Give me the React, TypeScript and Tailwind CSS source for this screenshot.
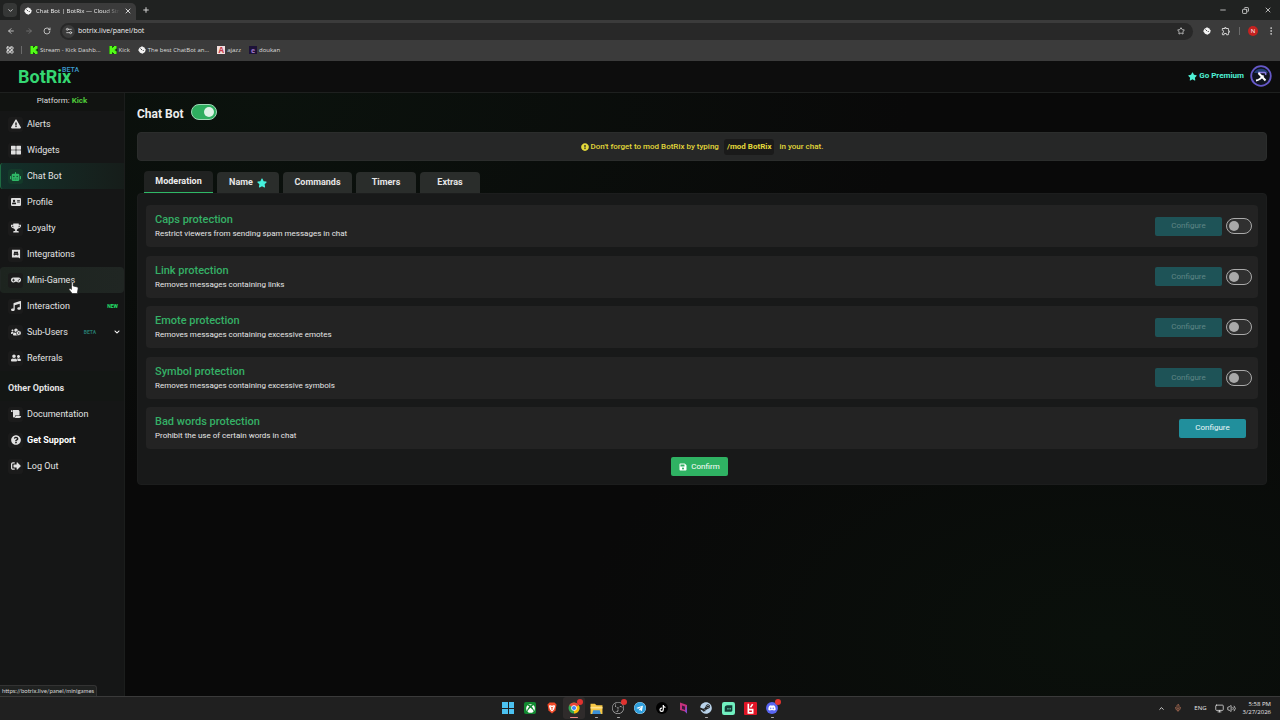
import React, { useState } from 'react';
import type { ReactNode } from 'react';
import {
  FaExclamationTriangle, FaThLarge, FaRobot, FaAddressCard, FaTrophy, FaGamepad, FaMusic, FaUsersCog,
  FaUserFriends, FaScroll, FaQuestionCircle, FaSignOutAlt, FaSave, FaStar, FaExclamationCircle,
  FaChevronDown, FaTelegram, FaTiktok, FaSteam, FaDiscord, FaXbox,
} from 'react-icons/fa';
import { SiKick, SiObsstudio } from 'react-icons/si';
import { MdOutlineExtension } from 'react-icons/md';
import {
  ArrowLeft, ArrowRight, RotateCw, ChevronDown, ChevronUp, X, Plus, Minus, Copy, Star,
  EllipsisVertical, Mic, Volume2, Settings2, LayoutGrid, Monitor,
} from 'lucide-react';

function BotrixMark({ className }: { className: string }) {
  return (
    <svg viewBox="0 0 16 16" className={className} aria-hidden="true">
      <path d="M4 3 8 .5l3.500 2L15.500 7l-1.500 5L9 15.500l-5-2L.5 8.500 2 5z" fill="#f4f4f4" />
      <path d="M5 5l3 3M9.500 8l2 2" stroke="#222" strokeWidth="1.600" />
    </svg>
  );
}

function Kick() {
  return (
    <span className="flex size-2 items-center justify-center bg-[#123a0c] text-[#53fc18]">
      <SiKick className="size-2" />
    </span>
  );
}

const bookmarks: { label: string; icon: ReactNode }[] = [
  { label: 'Stream - Kick Dashb...', icon: <Kick /> },
  { label: 'Kick', icon: <Kick /> },
  { label: 'The best ChatBot an...', icon: <BotrixMark className="size-2" /> },
  { label: 'ajazz', icon: <span className="flex size-2 items-center justify-center bg-[#f3dede] text-[8px] leading-none font-bold text-[#c33a48]">A</span> },
  { label: 'doukan', icon: <span className="flex size-2 items-center justify-center bg-[#1d1238] text-[7px] leading-none font-bold text-[#a177c9]">e</span> },
];

function Browser() {
  return (
    <div className="bg-[#3b3b3b] font-['Open_Sans','Noto_Sans',sans-serif] text-[#d4d4d4]">
      <div className="flex h-5 items-center justify-between bg-[#202221]">
        <div className="flex h-full items-center">
          <button type="button" aria-label="Search tabs" className="ml-[3px] flex size-[14px] items-center justify-center rounded-[4px] bg-[#353736]">
            <ChevronDown className="size-[7px]" strokeWidth={3} />
          </button>
          <div className="mt-[3px] ml-[3px] flex h-[17px] w-[116px] items-center gap-1 rounded-t-[5px] bg-[#3b3b3b] pr-1 pb-px pl-1">
            <BotrixMark className="size-2 shrink-0" />
            <span className="flex-1 overflow-hidden mask-r-from-80% text-[6px] whitespace-nowrap text-[#f0f0f0]">Chat Bot | BotRix — Cloud Strea</span>
            <button type="button" aria-label="Close tab" className="flex w-2 justify-center"><X className="size-2" strokeWidth={3} /></button>
          </div>
          <button type="button" aria-label="New tab" className="ml-[6px]"><Plus className="size-2" strokeWidth={3} /></button>
        </div>
        <div className="flex items-center gap-[15px] pr-2">
          <button type="button" aria-label="Minimize"><Minus className="size-2" strokeWidth={2.5} /></button>
          <button type="button" aria-label="Restore"><Copy className="size-[7px] rotate-90" strokeWidth={3} /></button>
          <button type="button" aria-label="Close"><X className="size-2" strokeWidth={2.5} /></button>
        </div>
      </div>
      <div className="flex h-[22px] items-center">
        <div className="flex w-[60px] items-center gap-[10px] pl-[7px]">
          <button type="button" aria-label="Back"><ArrowLeft className="size-2" strokeWidth={2.5} /></button>
          <button type="button" aria-label="Forward" className="text-[#777]"><ArrowRight className="size-2" strokeWidth={2.5} /></button>
          <button type="button" aria-label="Reload"><RotateCw className="size-2" strokeWidth={2.5} /></button>
        </div>
        <div className="flex h-[17px] flex-1 items-center gap-[3px] rounded-full bg-[#282828] pr-2 pl-[2px]">
          <span className="flex size-[13px] items-center justify-center rounded-full bg-[#3b3b3b]"><Settings2 className="size-2" strokeWidth={2.5} /></span>
          <input aria-label="Address" defaultValue="botrix.live/panel/bot" className="min-w-0 flex-1 bg-transparent text-[7px] text-[#f0f0f0] outline-none" />
          <button type="button" aria-label="Bookmark this page"><Star className="size-2" strokeWidth={2.5} /></button>
        </div>
        <div className="flex w-[87px] items-center pr-1 pl-2">
          <BotrixMark className="mx-[2px] size-2" />
          <button type="button" aria-label="Extensions" className="ml-2"><MdOutlineExtension className="size-[10px]" /></button>
          <span className="ml-2 h-2 w-px bg-[#6b6b6b]" />
          <span className="ml-2 flex size-[10px] items-center justify-center rounded-full bg-[#c5221f] text-[6px] leading-none text-white">N</span>
          <button type="button" aria-label="Menu" className="ml-2"><EllipsisVertical className="size-[10px]" /></button>
        </div>
      </div>
      <div className="flex h-[19px] items-center pb-[3px] pl-[6px] text-[6px] text-[#dedede]">
        <LayoutGrid className="size-2" strokeWidth={3} />
        <span className="mr-2 ml-[7px] h-2 w-px bg-[#6b6b6b]" />
        <div className="flex items-center gap-2">
          {bookmarks.map((b) => (
            <a key={b.label} href="#" className="flex items-center gap-[2px] whitespace-nowrap">{b.icon}{b.label}</a>
          ))}
        </div>
      </div>
    </div>
  );
}

function IntegrationsIcon({ className }: { className?: string }) {
  return (
    <svg viewBox="0 0 16 16" className={className} aria-hidden="true">
      <path fill="currentColor" fillRule="evenodd" d="M1.500 1h13v14l-2.500-1.500H1.500zM5 4.500 4 9.500l2 1 .7-1h2.600l.7 1 2-1-1-5-2-.5-.4.800H7.400L7 4zm1 2.500h1.200v1.500H6zm2.800 0H10v1.500H8.800z" />
    </svg>
  );
}

type Item = { label: string; Icon: React.ComponentType<{ className?: string }>; kind?: 'active' | 'hover'; tag?: string; more?: boolean; strong?: boolean };

const mainItems: Item[] = [
  { label: 'Alerts', Icon: FaExclamationTriangle },
  { label: 'Widgets', Icon: FaThLarge },
  { label: 'Chat Bot', Icon: FaRobot, kind: 'active' },
  { label: 'Profile', Icon: FaAddressCard },
  { label: 'Loyalty', Icon: FaTrophy },
  { label: 'Integrations', Icon: IntegrationsIcon },
  { label: 'Mini-Games', Icon: FaGamepad, kind: 'hover' },
  { label: 'Interaction', Icon: FaMusic, tag: 'NEW' },
  { label: 'Sub-Users', Icon: FaUsersCog, tag: 'BETA', more: true },
  { label: 'Referrals', Icon: FaUserFriends },
];

const otherItems: Item[] = [
  { label: 'Documentation', Icon: FaScroll },
  { label: 'Get Support', Icon: FaQuestionCircle, strong: true },
  { label: 'Log Out', Icon: FaSignOutAlt },
];

function NavItem({ label, Icon, kind, tag, more, strong }: Item) {
  const bg = kind === 'active'
    ? 'rounded-l-[3px] border-[#1f6b42] bg-linear-to-r from-[#12302a] to-[#161d1a]'
    : kind === 'hover' ? 'rounded-[4px] border-transparent bg-linear-to-r from-[#1d241f] to-[#202623]' : 'border-transparent';
  return (
    <li>
      <a href="#" className={`flex h-[26px] items-center border-l pr-1 pl-[7px] ${bg}`}>
        <span className={`flex size-[15px] items-center justify-center rounded-[3px] ${kind === 'active' ? 'bg-[#143a2a] text-[#2fb866]' : 'bg-[#1b1b1b] text-[#e0e0e0]'}`}>
          <Icon className={kind === 'active' ? 'size-[11px]' : 'size-[10px]'} />
        </span>
        <span className={`ml-1 flex-1 pt-px text-[9px] whitespace-nowrap ${strong ? 'font-bold text-white' : 'text-[#e4e4e4]'}`}>{label}</span>
        {tag && <span className={`pt-px text-[5px] font-bold ${more ? 'mr-[18px] text-[#26786f]' : 'mr-[2px] text-[#22e06a]'}`}>{tag}</span>}
        {more && <FaChevronDown className="size-[6px] text-white" />}
      </a>
    </li>
  );
}

function Sidebar() {
  return (
    <aside className="w-[125px] shrink-0 border-r border-[#1b1d1c] bg-[#151616]">
      <p className="flex h-[18px] items-center justify-center gap-[2px] bg-[#111311] pb-[3px] text-[8px] text-[#dedede]">
        Platform: <span className="font-bold text-[#4fc93a]">Kick</span>
      </p>
      <nav aria-label="Panel">
        <ul>{mainItems.map((i) => <NavItem key={i.label} {...i} />)}</ul>
        <h2 className="flex h-[30px] items-center bg-[#131614] pt-[6px] pl-2 text-[9px] font-bold text-[#e2e2e2]">Other Options</h2>
        <ul>{otherItems.map((i) => <NavItem key={i.label} {...i} />)}</ul>
      </nav>
    </aside>
  );
}

function Switch({ label, initial = false }: { label: string; initial?: boolean }) {
  const [on, setOn] = useState(initial);
  return (
    <label className="relative flex h-4 w-[26px] shrink-0 cursor-pointer items-center rounded-full border border-[#aaa] bg-[#303030] px-[2px] has-checked:border-[#9fd9b7] has-checked:bg-[#2fae60]">
      <input type="checkbox" role="switch" aria-label={label} checked={on} onChange={(e) => setOn(e.target.checked)} className="peer absolute inset-0 opacity-0" />
      <span className="size-[10px] rounded-full bg-[#a9a9a9] peer-checked:ml-auto peer-checked:bg-[#dff3e7]" />
    </label>
  );
}

const protections = [
  { title: 'Caps protection', text: 'Restrict viewers from sending spam messages in chat', toggle: true },
  { title: 'Link protection', text: 'Removes messages containing links', toggle: true },
  { title: 'Emote protection', text: 'Removes messages containing excessive emotes', toggle: true },
  { title: 'Symbol protection', text: 'Removes messages containing excessive symbols', toggle: true },
  { title: 'Bad words protection', text: 'Prohibit the use of certain words in chat', toggle: false },
];

const tabs = [
  { label: 'Name', width: 'w-[62px]', star: true },
  { label: 'Commands', width: 'w-[69px]' },
  { label: 'Timers', width: 'w-[60px]' },
  { label: 'Extras', width: 'w-[60px]' },
];

function Main() {
  return (
    <main className="min-w-0 flex-1 bg-[#090909] bg-[radial-gradient(ellipse_at_12%_0%,#0b120d_0%,transparent_45%),radial-gradient(ellipse_at_85%_90%,#0a100b_0%,transparent_38%)] pr-[13px] pl-3">
      <div className="mb-px flex h-[38px] items-center gap-[7px]">
        <h1 className="pt-1 text-[12px] font-bold text-[#ececec]">Chat Bot</h1>
        <Switch label="Chat Bot" initial />
      </div>
      <div className="flex h-[29px] items-center justify-center gap-[2px] rounded-[4px] border border-[#2b2d2c] bg-[#262727] text-[8px] font-medium text-[#e3d93a]">
        <FaExclamationCircle className="size-2" />
        <span>Don't forget to mod BotRix by typing</span>
        <code className="mx-[3px] rounded-[3px] bg-[#1a1a1a] px-[3px] py-[2px] font-['Roboto',sans-serif] font-bold">/mod BotRix</code>
        <span>in your chat.</span>
      </div>
      <div role="tablist" className="mt-[10px] flex h-[22px] items-end gap-1 px-[7px]">
        <button type="button" role="tab" aria-selected="true" className="h-[22px] w-[69px] rounded-t-[4px] border-b border-[#2fb866] bg-[#202221] text-[9px] font-bold text-[#ededed]">Moderation</button>
        {tabs.map((t) => (
          <button key={t.label} type="button" role="tab" aria-selected="false" className={`flex h-[21px] items-center justify-center gap-1 rounded-t-[4px] bg-[#2a2d2b] text-[9px] font-bold text-[#e6e6e6] ${t.width}`}>
            {t.label}
            {t.star && <FaStar className="size-[10px] text-[#45f0dc]" />}
          </button>
        ))}
      </div>
      <section className="rounded-[4px] border border-[#1c1d1d] bg-[#181919] px-2 pt-[11px] pb-2">
        <div className="flex min-h-[244px] flex-col justify-between">
          {protections.map((p) => (
            <article key={p.title} className="flex h-[42px] items-center gap-1 rounded-[4px] bg-[#232323] pr-[6px] pl-[9px]">
              <div className="flex-1 pt-[2px]">
                <h3 className="text-[11px] leading-[14px] font-medium text-[#35b066]">{p.title}</h3>
                <p className="text-[8px] leading-[14px] text-[#e6e6e6]">{p.text}</p>
              </div>
              <button type="button" disabled={p.toggle} className={`h-[19px] w-[67px] rounded-[2px] text-[8px] ${p.toggle ? 'bg-[#1e5357] text-[#5f8686]' : 'mr-[6px] bg-[#218f9c] text-[#edf7f8]'}`}>Configure</button>
              {p.toggle && <Switch label={p.title} />}
            </article>
          ))}
        </div>
        <div className="mt-2 flex justify-center pr-[5px]">
          <button type="button" className="flex h-[19px] items-center gap-1 rounded-[2px] bg-[#2fb263] px-2 text-[8px] text-white">
            <FaSave className="size-2" />Confirm
          </button>
        </div>
      </section>
    </main>
  );
}

function Avatar() {
  return (
    <svg viewBox="0 0 22 22" className="size-[22px]" role="img" aria-label="Account">
      <circle cx="11" cy="11" r="9.800" fill="#10141f" stroke="#6558c8" strokeWidth="1.800" />
      <path d="M4 8a8 8 0 0 1 14 0" fill="#223e75" />
      <path d="M8 7.500h6.500q2 .5 1 2.500" fill="none" stroke="#8a7be0" strokeWidth="1.500" />
      <path d="M8.500 8 15.500 15.500M6 15.500q4-.5 7.500-5" fill="none" stroke="#fff" strokeWidth="2" />
    </svg>
  );
}

function ChromeIcon() {
  return (
    <svg viewBox="0 0 24 24" className="size-3" aria-hidden="true">
      <circle cx="12" cy="12" r="11" fill="#34a853" />
      <path d="M12 12 2.500 6.500A11 11 0 0 1 21.500 6.500z" fill="#ea4335" />
      <path d="M12 12 21.500 6.500A11 11 0 0 1 12 23z" fill="#fbbc05" />
      <circle cx="12" cy="12" r="5.500" fill="#fff" />
      <circle cx="12" cy="12" r="4.200" fill="#4285f4" />
    </svg>
  );
}

const apps: { name: string; icon: ReactNode; state?: 'open' | 'active'; badge?: boolean }[] = [
  { name: 'Start', icon: <span className="grid size-3 grid-cols-2 gap-px">{[0, 1, 2, 3].map((n) => <span key={n} className="bg-[#4cc2f1]" />)}</span> },
  { name: 'Xbox', icon: <span className="flex size-3 items-center justify-center rounded-[2px] bg-[#128a31] text-white"><FaXbox className="size-[9px]" /></span> },
  { name: 'Brave', icon: <svg viewBox="0 0 24 24" className="size-3"><path d="M7 1h10l4 4-2 12-7 6-7-6L3 5z" fill="#f04a28" /><path d="M7 6l5 1.500L17 6l1 3-2 6-4 4-4-4-2-6z" fill="#fff" /><path d="M9.500 10l2.500 2 2.500-2M12 12v4" stroke="#f04a28" strokeWidth="1.800" fill="none" /></svg> },
  { name: 'Chrome', icon: <ChromeIcon />, state: 'active', badge: true },
  { name: 'File Explorer', icon: <svg viewBox="0 0 24 24" className="size-[13px]"><path d="M1 3h8l3 3h11v16H1z" fill="#f6c744" /><path d="M1 9h22v3H1z" fill="#ffe08a" /><path d="M6 15h12l2 7H4z" fill="#3b8fd6" /></svg>, state: 'open' },
  { name: 'OBS Studio', icon: <SiObsstudio className="size-3 text-[#c2c2c2]" />, state: 'open', badge: true },
  { name: 'Telegram', icon: <span className="rounded-full bg-white"><FaTelegram className="size-3 text-[#2f9fdd]" /></span> },
  { name: 'TikTok', icon: <span className="flex size-3 items-center justify-center rounded-full bg-black text-white"><FaTiktok className="size-[7px]" /></span> },
  { name: 'Editor', icon: <svg viewBox="0 0 24 24" className="size-3"><path d="M4 1l14 5v17l-4-4-10-3z" fill="#c6317c" /><path d="M8 7l6 2v7l-6-2z" fill="#3b1840" /><path d="M18 6v17l-4-4z" fill="#7d4fd1" /></svg> },
  { name: 'Steam', icon: <FaSteam className="size-3 text-[#b9d3ea]" />, state: 'open' },
  { name: 'Streamlabs', icon: <svg viewBox="0 0 24 24" className="size-[13px]"><rect width="24" height="24" rx="4" fill="#71f0c0" /><path d="M5 18V11q0-5 5-5h9v9q0 3-3 3z" fill="#123c36" /><path d="M11 11v3M15 11v3" stroke="#71f0c0" strokeWidth="1.800" /></svg> },
  { name: 'Recorder', icon: <svg viewBox="0 0 24 24" className="size-[13px]"><rect width="24" height="24" rx="2" fill="#e01526" /><path d="M8 3v17h8v-6H8M16 4l-4 6" fill="none" stroke="#fff" strokeWidth="3" /></svg> },
  { name: 'Discord', icon: <span className="flex size-3 items-center justify-center rounded-full bg-[#5865f2] text-white"><FaDiscord className="size-2" /></span>, state: 'open', badge: true },
];

function Taskbar() {
  return (
    <footer className="grid h-6 grid-cols-[1fr_auto_1fr] items-center border-t border-[#3a3a3a] bg-[#202020] font-['Open_Sans','Noto_Sans',sans-serif] text-[#e8e8e8]">
      <span />
      <div className="flex pb-px">
        {apps.map((a) => (
          <button key={a.name} type="button" aria-label={a.name} className={`relative flex h-[22px] w-[22px] items-center justify-center rounded-[3px] ${a.state === 'active' ? 'bg-[#2f2b2b]' : ''}`}>
            {a.icon}
            {a.badge && <span className="absolute top-[2px] right-[2px] size-[6px] rounded-full bg-[#e0322f]" />}
            {a.state && <span className={`absolute bottom-px h-px rounded-full ${a.state === 'active' ? 'w-2 bg-[#f08a83]' : 'w-[3px] bg-[#aaa]'}`} />}
          </button>
        ))}
      </div>
      <div className="flex items-center justify-end pr-[9px] pb-px text-[6px]">
        <ChevronUp className="size-[7px]" strokeWidth={3} />
        <Mic className="ml-[9px] size-2 text-[#c77b5d]" />
        <span className="ml-[12px]">ENG</span>
        <Monitor className="ml-2 size-[9px]" />
        <Volume2 className="ml-[3px] size-[9px]" />
        <p className="ml-[7px] text-right leading-[8px]">5:58 PM<br />3/27/2026</p>
      </div>
    </footer>
  );
}

export default function App() {
  return (
    <div className="relative flex min-h-screen flex-col overflow-hidden bg-[#090909] font-['Roboto',sans-serif] leading-normal">
      <Browser />
      <header className="flex h-8 items-center justify-between border-b border-[#1e201f] bg-[#0d0d0d] pr-2 pb-px pl-[18px]">
        <a href="#" className="relative text-[18px] font-bold text-[#35d873]">
          BotRix
          <sup className="absolute top-1 left-[44px] text-[7px] leading-none font-medium text-[#3d9bd0]">BETA</sup>
        </a>
        <div className="flex items-center gap-[6px]">
          <a href="#" className="flex items-center gap-[2px] text-[8px] font-bold text-[#4ff0d6]"><FaStar className="size-[9px]" />Go Premium</a>
          <Avatar />
        </div>
      </header>
      <div className="flex flex-1">
        <Sidebar />
        <Main />
      </div>
      <Taskbar />
      <span className="absolute bottom-6 left-0 rounded-tr-[3px] border-t border-r border-[#333] bg-[#202221] px-[2px] font-['Lato','Noto_Sans',sans-serif] text-[6px] leading-[10px] text-[#d5d5d5]">https://botrix.live/panel/minigames</span>
      <svg viewBox="0 0 16 20" className="pointer-events-none absolute top-[281px] left-[68px] h-[14px] w-[11px]" aria-hidden="true">
        <path d="M5 2q1.500-1.500 2.500 0v5l6 1.500q1.500.5 1.200 2.500L13.500 18H6L1.500 12q0-2 2-1.200L5 12z" fill="#fff" stroke="#222" strokeWidth="1" />
      </svg>
    </div>
  );
}
